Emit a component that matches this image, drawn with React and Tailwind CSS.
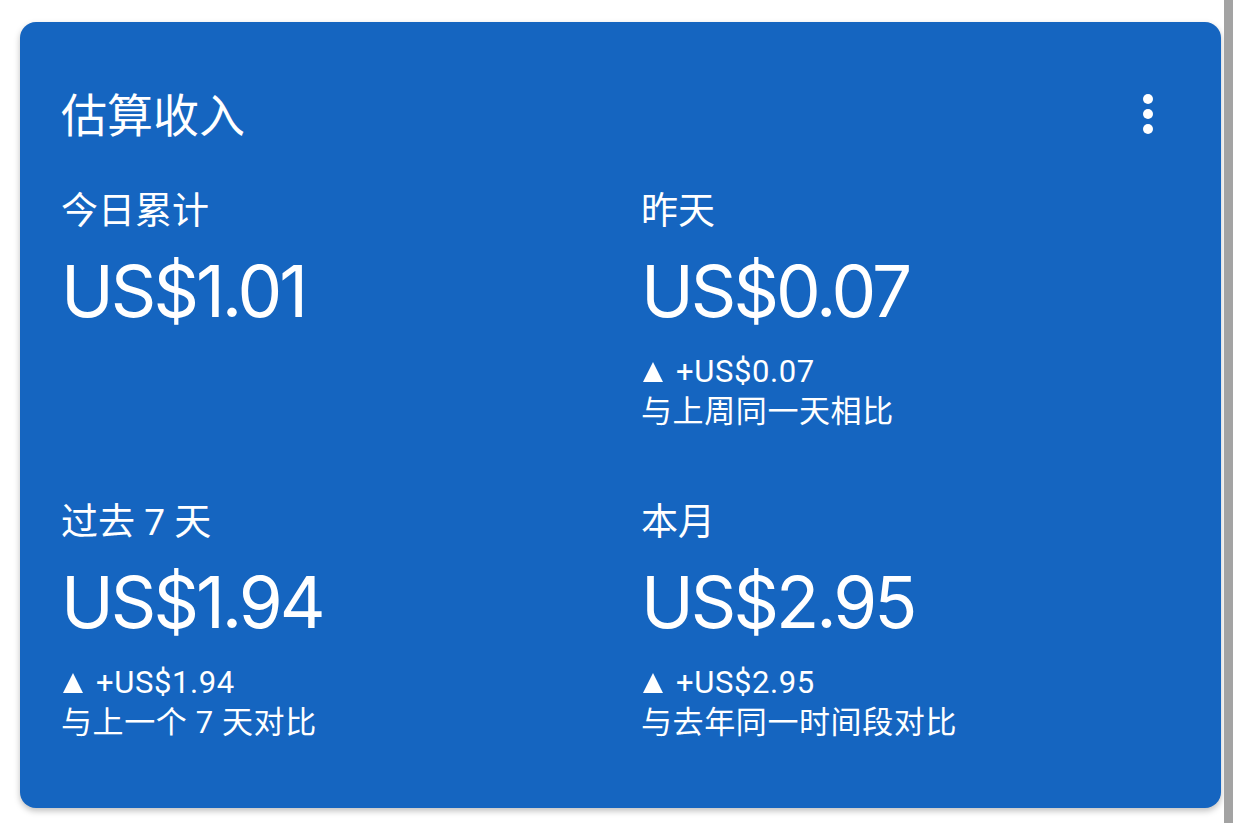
import React from "react";

const cjk = '"Noto Sans CJK SC", sans-serif';
const num = 'Inter, "Noto Sans CJK SC", sans-serif';
const small = 'Roboto, "Noto Sans CJK SC", sans-serif';

const stats = [
  { label: "今日累计", value: "US$1.01" },
  { label: "昨天", value: "US$0.07", delta: "+US$0.07", note: "与上周同一天相比" },
  { label: "过去 7 天", value: "US$1.94", delta: "+US$1.94", note: "与上一个 7 天对比" },
  { label: "本月", value: "US$2.95", delta: "+US$2.95", note: "与去年同一时间段对比" },
];

function Stat({ s }) {
  return (
    <div className="flex flex-col text-white">
      <div className="text-[37px] leading-[44px]" style={{ fontFamily: small }}>
        {s.label}
      </div>
      <div className="mt-[15px] text-[71px] leading-[84px] tracking-[-3px]" style={{ fontFamily: num }}>
        {s.value}
      </div>
      {s.delta && (
        <div className="mt-[19px] text-[31px] tracking-[0.6px]" style={{ fontFamily: small }}>
          <div className="flex items-center h-[40px]">
            <svg width="20" height="20" viewBox="0 0 20 20" className="ml-[2px] mr-[13px]">
              <polygon points="10,0 20,20 0,20" fill="white" />
            </svg>
            <span>{s.delta}</span>
          </div>
          <div className="h-[40px] leading-[40px]">{s.note}</div>
        </div>
      )}
    </div>
  );
}

export default function App() {
  return (
    <div className="min-h-screen bg-white flex items-start">
      <div className="pl-5 pt-[22px]">
        <div className="w-[1201px] h-[786px] rounded-2xl bg-[#1565c0] shadow-[0_3px_6px_rgba(0,0,0,0.25)] pl-[41px] pr-[60px] pt-[62px]">
          <div className="flex items-center justify-between h-[56px]">
            <h1 className="text-white text-[46px] leading-[56px]" style={{ fontFamily: cjk }}>
              估算收入
            </h1>
            <div className="flex flex-col items-center gap-[5px] w-[26px] mt-[3px]">
              <span className="w-[10px] h-[10px] rounded-full bg-white" />
              <span className="w-[10px] h-[10px] rounded-full bg-white" />
              <span className="w-[10px] h-[10px] rounded-full bg-white" />
            </div>
          </div>
          <div className="mt-[50px] grid grid-cols-[580px_1fr] gap-y-[69px]">
            {stats.map((s) => (
              <Stat key={s.label} s={s} />
            ))}
          </div>
        </div>
      </div>
      <div className="ml-[3px] w-[9px] h-screen bg-[#a3a3a3]" />
    </div>
  );
}
